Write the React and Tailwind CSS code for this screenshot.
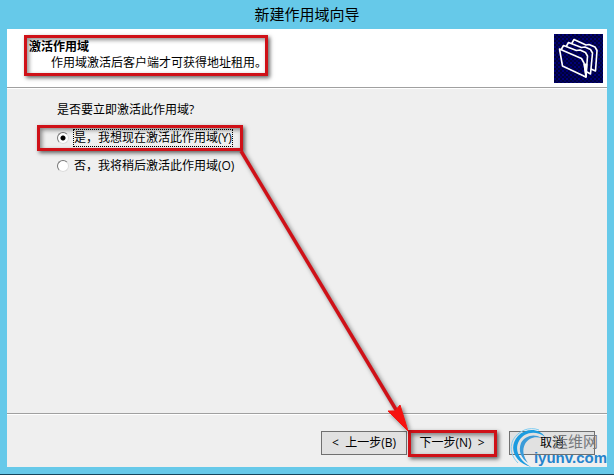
import React, { useState } from 'react';

const OPTIONS = [
    { value: 'yes', label: '是，我想现在激活此作用域(Y)' },
    { value: 'no', label: '否，我将稍后激活此作用域(O)' },
];

// Red frame drawn around whatever the user should look at
function Highlight({ className }) {
    return (
        <span
            aria-hidden="true"
            className={`absolute pointer-events-none border-3 border-[#cf1118] shadow-[2px_2px_4px_rgba(0,0,0,0.6),inset_2px_2px_4px_rgba(0,0,0,0.45)] ${className}`}
        />
    );
}

function FoldersIcon() {
    return (
        <svg className="w-[49px] h-[49px] flex-shrink-0" viewBox="0 0 49 49" aria-hidden="true">
            <defs>
                <pattern id="dither" width="4" height="4" patternUnits="userSpaceOnUse">
                    <rect width="4" height="4" fill="#00003c" />
                    <rect width="2" height="2" fill="#000078" />
                    <rect x="2" y="2" width="2" height="2" fill="#000060" />
                </pattern>
            </defs>
            <rect width="49" height="49" fill="url(#dither)" />
            <g fill="url(#dither)" stroke="#fff" strokeWidth="1.6" strokeLinejoin="round">
                <path d="M18 9 L20 5.5 L32 11 L35 10.5 L41 13 L43 16.5 L41.5 37 L38 35.5 L18 20 Z" />
                <path d="M12.5 12 L14.5 8.5 L27.5 13.5 L31 13 L36.5 15.5 L38.5 19 L36.5 40 L33 38 L13 22 Z" />
                <path d="M7.5 15 L9.5 11.5 L22.5 16.5 L26 16 L31.5 18.5 L33.5 22 L32 43 L8 28 Z" />
                <path d="M5.5 15 L27.5 24.5 L30 29 L32 43 L8.5 32 Z" />
                <path d="M30 30 L33 30 L32 43 Z" fill="#fff" strokeWidth="1" />
            </g>
        </svg>
    );
}

function Arrow() {
    return (
        <svg
            className="absolute left-0 top-0 pointer-events-none drop-shadow-[2px_2px_2px_rgba(0,0,0,0.5)]"
            width="614"
            height="475"
            viewBox="0 0 614 475"
            aria-hidden="true"
        >
            <line x1="241" y1="151" x2="398" y2="413" stroke="#cf1118" strokeWidth="3.5" />
            <path d="M408 431 L388 411 L395 411 L400 405 Z" fill="#f5120f" stroke="#f5120f" strokeLinejoin="round" />
        </svg>
    );
}

function Watermark() {
    return (
        <div className="absolute right-0 bottom-0 w-[98px] h-10 pointer-events-none">
            <svg className="absolute left-0 top-0" width="50" height="40" viewBox="0 0 50 40" aria-hidden="true">
                <path
                    d="M36 10 C30 1 17 1 9 9 C-1 20 5 35 22 40 C10 33 5 23 10 14 C15 5 27 3 36 10 Z"
                    fill="#1b9ce0"
                />
                <path
                    d="M32 11 C25 6 16 9 12 16 C9 24 12 31 19 36 C14 29 13 23 16 17 C19 12 25 9 32 11 Z"
                    fill="#3a9bd9"
                />
                <path d="M30 3 C20 -1 9 4 4 13 C0 22 3 30 9 36" fill="none" stroke="#7fcdf2" strokeWidth="1" />
            </svg>
            <span className="absolute right-[9px] top-1 text-[15px] leading-5 text-[#77797c] whitespace-nowrap">运维网</span>
            <span className="absolute right-0 top-[23px] text-[15px] leading-4 font-bold text-[#2583cc] whitespace-nowrap font-['Liberation_Sans',sans-serif]">
                iyunv.com
            </span>
        </div>
    );
}

function WizardButton({ children }) {
    return (
        <button type="button" className="w-[86px] h-6 border border-[#707070] bg-[#e1e1e1] text-center leading-5 whitespace-pre">
            {children}
        </button>
    );
}

export default function App() {
    const [choice, setChoice] = useState('yes');

    return (
        <div className="relative min-h-screen flex flex-col bg-[#66c9e9] border-b border-[#16455c] px-[7px] pb-[7px] text-xs text-black font-['Open_Sans','Noto_Sans_CJK_SC',sans-serif]">
            <h1 className="h-[29px] text-center text-[15px] leading-7">新建作用域向导</h1>

            <main className="relative flex-1 flex flex-col bg-[#efefef]">
                {/* Page header */}
                <header className="flex items-start justify-between bg-white border-b border-[#a0a0a0] h-[59px] pl-[22px] pr-1">
                    <div className="relative pt-2.5 leading-4">
                        <h2 className="font-bold">激活作用域</h2>
                        <p className="pl-[22px]">作用域激活后客户端才可获得地址租用。</p>
                        <Highlight className="-left-[5px] top-1.5 -right-px -bottom-[5px]" />
                    </div>
                    <div className="pt-[5px]">
                        <FoldersIcon />
                    </div>
                </header>

                {/* Question */}
                <fieldset className="flex-1 border-t border-white pl-[50px] pt-[11px] leading-5">
                    <legend className="float-left w-full">是否要立即激活此作用域?</legend>
                    <div className="clear-both flex flex-col items-start gap-2.5 pt-[9px]">
                        {OPTIONS.map((option) => (
                            <label key={option.value} className="relative flex items-center gap-1">
                                <input
                                    type="radio"
                                    name="activate"
                                    value={option.value}
                                    checked={choice === option.value}
                                    onChange={() => setChoice(option.value)}
                                    className="appearance-none w-3 h-3 rounded-full bg-white border border-t-[#777] border-l-[#777] border-b-[#ddd] border-r-[#ddd] checked:bg-[radial-gradient(circle,#000_2px,#fff_3px)]"
                                />
                                <span
                                    className={`border border-dotted leading-4 ${choice === option.value ? 'border-black' : 'border-transparent'}`}
                                >
                                    {option.label}
                                </span>
                                {option.value === 'yes' && <Highlight className="-left-5 -right-2.5 -top-1 -bottom-1" />}
                            </label>
                        ))}
                    </div>
                </fieldset>

                {/* Buttons */}
                <footer className="flex justify-end border-t border-[#a0a0a0] shadow-[inset_0_1px_0_#fff] pt-[17px] pb-3 pr-3">
                    <WizardButton>{'<  上一步(B)'}</WizardButton>
                    <div className="relative flex ml-0.5 mr-3.5">
                        <WizardButton>{'下一步(N)  >'}</WizardButton>
                        <Highlight className="-left-px -right-0.5 -top-px -bottom-0.5" />
                    </div>
                    <WizardButton>取消</WizardButton>
                </footer>

                <Watermark />
            </main>

            <Arrow />
        </div>
    );
}
